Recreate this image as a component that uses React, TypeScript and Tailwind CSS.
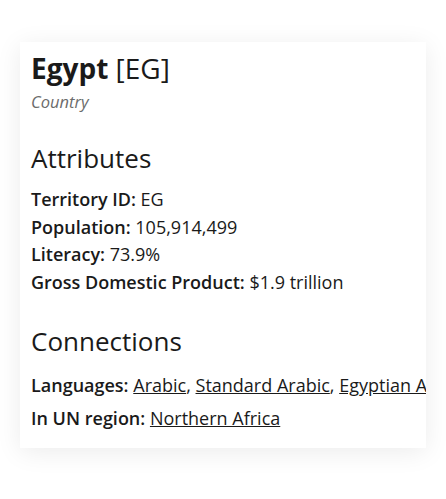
import React from 'react';

const font = { fontFamily: '"Open Sans", Lato, sans-serif' };

export default function App() {
  return (
    <div className="min-h-[499px] w-[446px] bg-white pt-[42px] pl-[20px]" style={font}>
      <div className="w-[406px] h-[406px] overflow-hidden bg-white px-[11px] pt-[8px] text-[#1a1a1a] shadow-[0_4px_24px_rgba(0,0,0,0.08)]">
        <h1 className="text-[28px] leading-[36px] font-bold">Egypt <span className="font-normal">[EG]</span></h1>
        <div className="mt-[6px] text-[16.5px] leading-[20px] italic text-[#6b6b6b]">Country</div>

        <h2 className="mt-[31px] text-[26px] leading-[30px] font-medium">Attributes</h2>
        <div className="mt-[13px] text-[18px] leading-[27.5px]">
          <div><span className="font-semibold">Territory ID:</span> EG</div>
          <div><span className="font-semibold">Population:</span> 105,914,499</div>
          <div><span className="font-semibold">Literacy:</span> 73.9%</div>
          <div><span className="font-semibold">Gross Domestic Product:</span> $1.9 trillion</div>
        </div>

        <h2 className="mt-[30px] text-[26px] leading-[30px] font-medium">Connections</h2>
        <div className="mt-[13px] text-[18px] leading-[32.5px] whitespace-nowrap">
          <div>
            <span className="font-semibold">Languages:</span> <a className="underline">Arabic</a>, <a className="underline">Standard Arabic</a>, <a className="underline">Egyptian Arabic</a>
          </div>
          <div>
            <span className="font-semibold">In UN region:</span> <a className="underline">Northern Africa</a>
          </div>
        </div>
      </div>
    </div>
  );
}
